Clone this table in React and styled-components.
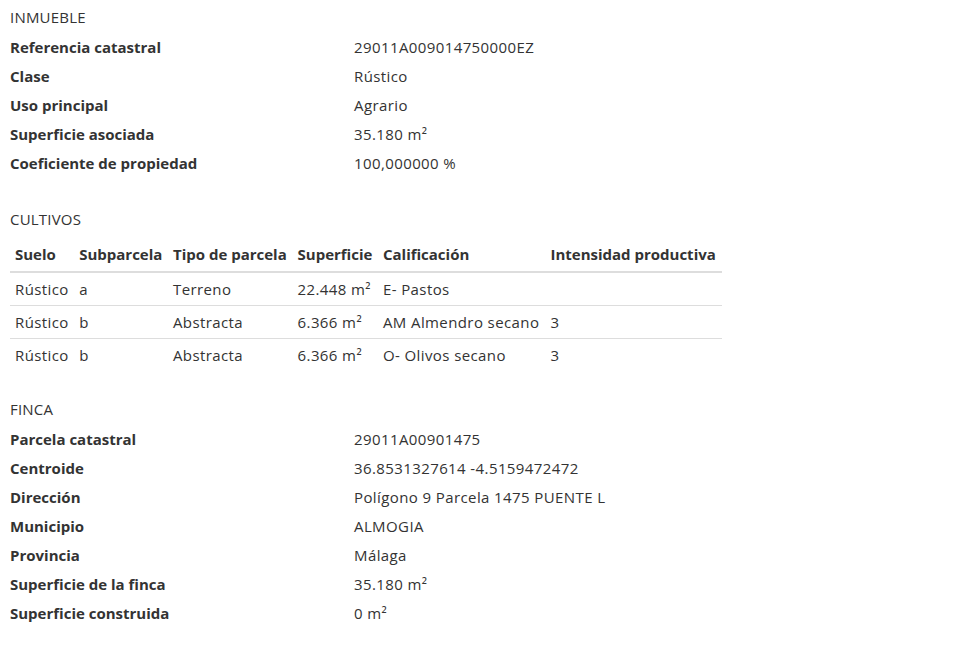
import styled, { createGlobalStyle } from 'styled-components'

const GlobalStyle = createGlobalStyle`
    body {
        margin: 0;
        background: #ffffff;
        color: #333333;
        font-family: 'Open Sans', 'Liberation Sans', sans-serif;
        font-size: 15px;
    }
`

const inmueble = [
    ['Referencia catastral', '29011A009014750000EZ'],
    ['Clase', 'Rústico'],
    ['Uso principal', 'Agrario'],
    ['Superficie asociada', '35.180 m²'],
    ['Coeficiente de propiedad', '100,000000 %']
]

const cultivos = [
    ['Rústico', 'a', 'Terreno', '22.448 m²', 'E- Pastos', ''],
    ['Rústico', 'b', 'Abstracta', '6.366 m²', 'AM Almendro secano', '3'],
    ['Rústico', 'b', 'Abstracta', '6.366 m²', 'O- Olivos secano', '3']
]

const cultivoHeaders = ['Suelo', 'Subparcela', 'Tipo de parcela', 'Superficie', 'Calificación', 'Intensidad productiva']

const finca = [
    ['Parcela catastral', '29011A00901475'],
    ['Centroide', '36.8531327614 -4.5159472472'],
    ['Dirección', 'Polígono 9 Parcela 1475 PUENTE L'],
    ['Municipio', 'ALMOGIA'],
    ['Provincia', 'Málaga'],
    ['Superficie de la finca', '35.180 m²'],
    ['Superficie construida', '0 m²']
]

const InfoList = ({ rows }) => (
    <List>
        {rows.map(([label, value]) => (
            <Row key={label}>
                <Label>{label}</Label>
                <Value>{value}</Value>
            </Row>
        ))}
    </List>
)

const App = () => {
    return (
        <Page>
            <GlobalStyle />
            <Section $gap={31}>
                <SectionTitle>INMUEBLE</SectionTitle>
                <InfoList rows={inmueble} />
            </Section>
            <Section $gap={28}>
                <SectionTitle>CULTIVOS</SectionTitle>
                <Table>
                    <thead>
                        <tr>
                            {cultivoHeaders.map(h => (
                                <Th key={h}>{h}</Th>
                            ))}
                        </tr>
                    </thead>
                    <tbody>
                        {cultivos.map((row, i) => (
                            <tr key={i}>
                                {row.map((cell, j) => (
                                    <Td key={j}>{cell}</Td>
                                ))}
                            </tr>
                        ))}
                    </tbody>
                </Table>
            </Section>
            <Section>
                <SectionTitle>FINCA</SectionTitle>
                <InfoList rows={finca} />
            </Section>
        </Page>
    )
}

const Page = styled.div`
    padding: 7px 10px 20px;
    display: flex;
    flex-direction: column;
`

const Section = styled.section`
    display: flex;
    flex-direction: column;
    margin-bottom: ${({ $gap }) => $gap || 0}px;
`

const SectionTitle = styled.h2`
    margin: 0 0 6px;
    font-size: 15px;
    font-weight: 400;
    line-height: 20px;
    letter-spacing: 0.2px;
`

const List = styled.div`
    display: flex;
    flex-direction: column;
`

const Row = styled.div`
    display: grid;
    grid-template-columns: 344px 1fr;
    line-height: 29px;
`

const Label = styled.span`
    font-weight: 700;
`

const Value = styled.span`
    font-weight: 400;
    letter-spacing: 0.4px;
`

const Table = styled.table`
    border-collapse: collapse;
    width: 712px;
    margin-top: 4px;
`

const Th = styled.th`
    text-align: left;
    font-weight: 700;
    padding: 5px 5px 7px;
    white-space: nowrap;
    border-bottom: 2px solid #dddddd;
    line-height: 20px;
`

const Td = styled.td`
    padding: 6px 5px 6px;
    white-space: nowrap;
    line-height: 20px;
    letter-spacing: 0.4px;
    border-top: 1px solid #dddddd;

    tr:first-child > & {
        border-top: none;
    }
`

export default App
